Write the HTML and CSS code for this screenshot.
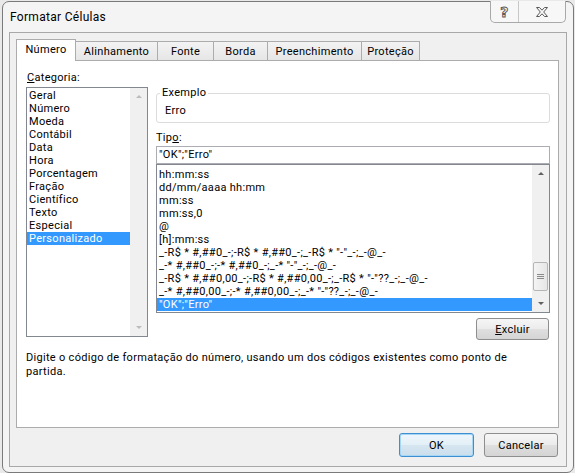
FILE: index.html
```html
<!DOCTYPE html>
<html>
<head>
<meta charset="utf-8">
<title>Formatar Células</title>
<link rel="stylesheet" href="styles.css">
</head>
<body>
<div class="window">
  <div class="titlebar">
    <div class="title">Formatar Células</div>
    <div class="caption-btns">
      <div class="cbtn help"><span class="helpglyph">?</span></div>
      <div class="cbtn close">
        <svg width="12" height="10" viewBox="0 0 12 10"><path d="M0.5 0.5 H3.5 L6 3.2 L8.5 0.5 H11.5 L7.7 5 L11.5 9.5 H8.5 L6 6.8 L3.5 9.5 H0.5 L4.3 5 Z" fill="none" stroke="#5a5a5a" stroke-width="1"/></svg>
      </div>
    </div>
  </div>
  <div class="client">
    <div class="tabs">
      <div class="tab sel w1">Número</div>
      <div class="tab w2">Alinhamento</div>
      <div class="tab w3">Fonte</div>
      <div class="tab w4">Borda</div>
      <div class="tab w5">Preenchimento</div>
      <div class="tab w6">Proteção</div>
    </div>
    <div class="panel">
      <div class="main">
        <div class="leftcol">
          <div class="label"><u>C</u>ategoria:</div>
          <div class="listbox catlist">
            <div class="items">
              <div class="item">Geral</div>
              <div class="item">Número</div>
              <div class="item">Moeda</div>
              <div class="item">Contábil</div>
              <div class="item">Data</div>
              <div class="item">Hora</div>
              <div class="item">Porcentagem</div>
              <div class="item">Fração</div>
              <div class="item">Científico</div>
              <div class="item">Texto</div>
              <div class="item">Especial</div>
              <div class="item hl">Personalizado</div>
            </div>
            <div class="vscroll off">
              <div class="arrow up"></div>
              <div class="track"></div>
              <div class="arrow down"></div>
            </div>
          </div>
        </div>
        <div class="rightcol">
          <fieldset class="sample">
            <legend>Exemplo</legend>
            <div class="sampletext">Erro</div>
          </fieldset>
          <div class="label tipo">Tip<u>o</u>:</div>
          <div class="input">"OK";"Erro"</div>
          <div class="listbox typelist">
            <div class="items">
              <div class="item">hh:mm:ss</div>
              <div class="item">dd/mm/aaaa hh:mm</div>
              <div class="item">mm:ss</div>
              <div class="item">mm:ss,0</div>
              <div class="item">@</div>
              <div class="item">[h]:mm:ss</div>
              <div class="item">_-R$ * #,##0_-;-R$ * #,##0_-;_-R$ * "-"_-;_-@_-</div>
              <div class="item">_-* #,##0_-;-* #,##0_-;_-* "-"_-;_-@_-</div>
              <div class="item">_-R$ * #,##0,00_-;-R$ * #,##0,00_-;_-R$ * "-"??_-;_-@_-</div>
              <div class="item">_-* #,##0,00_-;-* #,##0,00_-;_-* "-"??_-;_-@_-</div>
              <div class="item hl">"OK";"Erro"</div>
            </div>
            <div class="vscroll on">
              <div class="arrow up"></div>
              <div class="track">
                <div class="thumb"><span class="grip"></span><span class="grip"></span><span class="grip"></span></div>
              </div>
              <div class="arrow down"></div>
            </div>
          </div>
          <div class="delrow"><button class="btn excluir"><u>E</u>xcluir</button></div>
        </div>
      </div>
      <div class="desc">Digite o código de formatação do número, usando um dos códigos existentes como ponto de<br>partida.</div>
    </div>
    <div class="footer">
      <button class="btn default">OK</button>
      <button class="btn">Cancelar</button>
    </div>
  </div>
</div>
</body>
</html>
```
FILE: styles.css
```css
html, body {
  margin: 0;
  padding: 0;
}
body {
  background: #e9e9e9;
  font-family: Roboto, "Noto Sans", sans-serif;
  font-size: 11px;
  letter-spacing: 0.3px;
  color: #000;
  width: 575px;
  height: 473px;
  overflow: hidden;
}
.window {
  box-sizing: border-box;
  margin: 1px 0 0 2px;
  width: 572px;
  height: 472px;
  border: 1px solid #7a7a7a;
  border-radius: 7px;
  background: #f4f4f4;
  padding: 0 6px 5px 6px;
  display: flex;
  flex-direction: column;
}
.titlebar {
  height: 30px;
  display: flex;
  align-items: center;
  flex: none;
}
.title {
  flex: 1;
  padding-left: 1px;
  font-size: 12px;
  color: #000;
}
.caption-btns {
  align-self: flex-start;
  margin-top: -1px;
  margin-right: 1px;
  height: 21px;
  display: flex;
  border: 1px solid #a9a9a9;
  border-top: none;
  border-radius: 0 0 5px 5px;
  background: #f7f7f7;
}
.cbtn {
  display: flex;
  align-items: center;
  justify-content: center;
}
.help {
  width: 27px;
  border-right: 1px solid #c8c8c8;
}
.helpglyph {
  font-family: "DejaVu Sans", sans-serif;
  font-size: 14px;
  font-weight: bold;
  color: transparent;
  -webkit-text-stroke: 1px #5a5a5a;
  line-height: 14px;
}
.close {
  width: 46px;
}
.client {
  flex: 1;
  border: 1px solid #a8a8a8;
  background: #f0f0f0;
  padding: 6px 7px 0 6px;
  display: flex;
  flex-direction: column;
}
.tabs {
  display: flex;
  align-items: flex-end;
  height: 21px;
  position: relative;
  z-index: 1;
  flex: none;
}
.tab {
  box-sizing: border-box;
  height: 19px;
  border: 1px solid #acacac;
  border-bottom: none;
  background: linear-gradient(#f3f3f3, #e6e6e6);
  display: flex;
  align-items: center;
  justify-content: center;
  margin-left: -1px;
  color: #000;
}
.tab.sel {
  height: 22px;
  margin-bottom: -1px;
  background: #fff;
  margin-left: 0;
  padding-bottom: 2px;
  position: relative;
  z-index: 2;
}
.w1 { width: 60px; }
.w2 { width: 83px; }
.w3 { width: 57px; }
.w4 { width: 55px; }
.w5 { width: 95px; }
.w6 { width: 59px; }
.panel {
  box-sizing: border-box;
  height: 368px;
  flex: none;
  border: 1px solid #acacac;
  background: #fff;
}
.main {
  display: flex;
  align-items: flex-start;
  padding: 9px 8px 0 9px;
}
.leftcol {
  width: 122px;
  flex: none;
}
.label {
  line-height: 15px;
  height: 15px;
  margin-bottom: 2px;
  padding-left: 1px;
}
.listbox {
  box-sizing: border-box;
  border: 1px solid #828790;
  display: flex;
  background: #fff;
}
.catlist {
  height: 250px;
}
.items {
  flex: 1;
  min-width: 0;
  overflow: hidden;
}
.catlist .items {
  padding-top: 1px;
}
.item {
  height: 13px;
  line-height: 13px;
  padding-left: 2px;
  white-space: nowrap;
}
.item.hl {
  background: #3399ff;
  color: #fff;
}
.vscroll {
  width: 17px;
  flex: none;
  display: flex;
  flex-direction: column;
  background: #f0f0f0;
}
.arrow {
  height: 17px;
  display: flex;
  align-items: center;
  justify-content: center;
}
.arrow::before {
  content: "";
  width: 0;
  height: 0;
  border-left: 3px solid transparent;
  border-right: 3px solid transparent;
}
.arrow.up::before {
  border-bottom: 3px solid #606060;
}
.arrow.down::before {
  border-top: 3px solid #606060;
}
.vscroll.off .arrow.up::before {
  border-bottom-color: #bcbcbc;
}
.vscroll.off .arrow.down::before {
  border-top-color: #bcbcbc;
}
.track {
  flex: 1;
  display: flex;
  flex-direction: column;
  justify-content: flex-end;
  padding: 0 1px 4px 1px;
}
.thumb {
  box-sizing: border-box;
  height: 29px;
  border: 1px solid #b5b5b5;
  border-radius: 2px;
  background: linear-gradient(90deg, #f4f4f4, #e6e6e6);
  display: flex;
  flex-direction: column;
  align-items: center;
  justify-content: center;
  gap: 1px;
}
.grip {
  width: 7px;
  height: 1px;
  background: #8a8a8a;
}
.rightcol {
  flex: 1;
  margin-left: 8px;
  margin-top: 16px;
  display: flex;
  flex-direction: column;
}
.sample {
  margin: 0;
  padding: 0 3px;
  border: 1px solid #dcdcdc;
  border-radius: 3px;
  height: 37px;
  box-sizing: border-box;
}
.sample legend {
  padding: 0 2px;
  line-height: 14px;
}
.sampletext {
  line-height: 14px;
  padding: 4px 0 0 5px;
}
.label.tipo {
  margin-top: 7px;
  margin-bottom: 1px;
  padding-left: 0;
}
.input {
  box-sizing: border-box;
  height: 18px;
  border: 1px solid #abadb3;
  line-height: 16px;
  padding-left: 2px;
  background: #fff;
}
.typelist {
  height: 149px;
}
.typelist .items {
  padding-top: 3px;
}
.delrow {
  display: flex;
  justify-content: flex-end;
  margin-top: 5px;
  padding-right: 1px;
}
.btn {
  box-sizing: border-box;
  font-family: Roboto, "Noto Sans", sans-serif;
  font-size: 11px;
  letter-spacing: 0.3px;
  color: #000;
  border: 1px solid #8e8e8e;
  border-radius: 3px;
  background: linear-gradient(#f6f6f6, #ececec 48%, #dfdfdf 52%, #d4d4d4);
  padding: 0;
  margin: 0;
  display: flex;
  align-items: center;
  justify-content: center;
}
.excluir {
  width: 73px;
  height: 22px;
}
.desc {
  margin-top: 11px;
  padding-left: 9px;
  line-height: 14px;
}
.footer {
  display: flex;
  justify-content: flex-end;
  gap: 10px;
  margin-top: 5px;
  padding-right: 1px;
}
.footer .btn {
  width: 74px;
  height: 24px;
}
.btn.default {
  width: 75px;
  border: 1px solid #3c8fd0;
  box-shadow: inset 0 0 0 1px #a6d6f6;
  background: linear-gradient(#eef6fb, #e3eff7 48%, #d6e6f1 52%, #cadeec);
}
```
